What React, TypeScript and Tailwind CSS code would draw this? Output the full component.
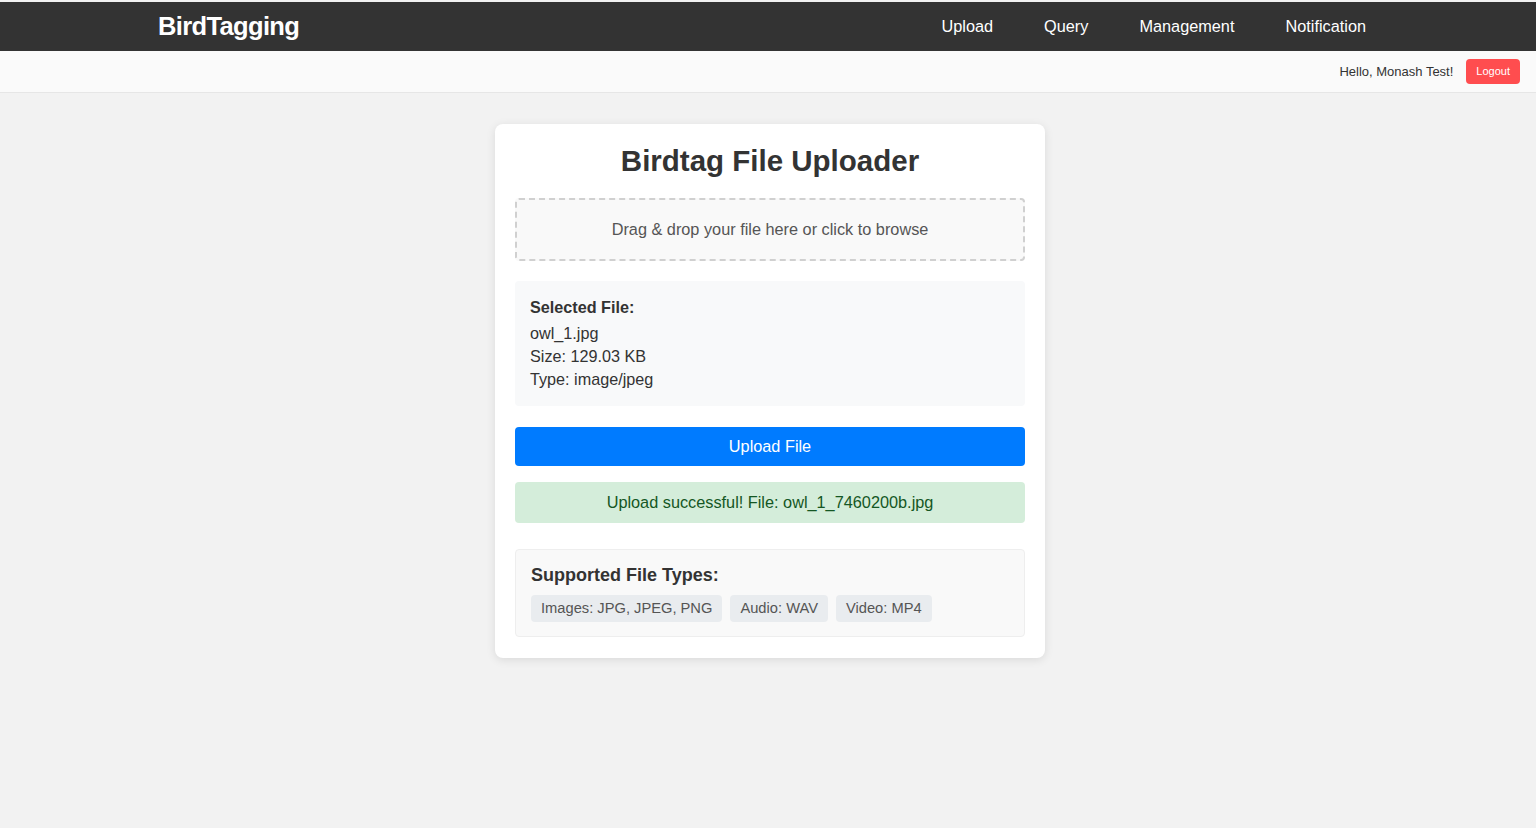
export default function App() {
  return (
    <div
      className="min-h-screen bg-[#f2f2f2] pt-[2px] text-[#333]"
      style={{ fontFamily: '"Liberation Sans", Arial, sans-serif' }}
    >
      {/* Top navigation */}
      <header className="flex h-[49px] items-center bg-[#333] pl-[158px] pr-[170px]">
        <span className="text-[25.5px] font-bold tracking-tight text-white">BirdTagging</span>
        <nav className="ml-auto flex gap-[51px] text-[16.3px] text-white">
          <a>Upload</a>
          <a>Query</a>
          <a>Management</a>
          <a>Notification</a>
        </nav>
      </header>

      {/* User bar */}
      <div className="flex h-[42px] items-center justify-end border-b border-[#e6e6e6] bg-[#fafafa] pr-[16px]">
        <span className="mr-[13px] text-[13px] text-[#333]">Hello, Monash Test!</span>
        <button className="h-[25px] rounded-[4px] bg-[#ff4d4f] px-[10px] text-[11px] text-white">
          Logout
        </button>
      </div>

      {/* Uploader card */}
      <main className="flex justify-center pl-[4px] pt-[31px]">
        <div className="w-[550px] rounded-[8px] bg-white px-[20px] pb-[21px] pt-[19px] shadow-[0_2px_10px_rgba(0,0,0,0.1)]">
          <h1 className="text-center text-[29.5px] font-bold leading-[36px] text-[#333]">
            Birdtag File Uploader
          </h1>

          <div className="mt-[19px] flex h-[63px] items-center justify-center rounded-[4px] border-2 border-dashed border-[#d0d0d0] bg-[#f9f9f9] text-[16.3px] text-[#555]">
            Drag &amp; drop your file here or click to browse
          </div>

          <div className="mt-[20px] rounded-[4px] bg-[#f8f9fa] px-[15px] pb-[15px] pt-[15px] text-[16.2px] leading-[23px] text-[#333]">
            <div className="mb-[3px] font-bold">Selected File:</div>
            <div>owl_1.jpg</div>
            <div>Size: 129.03 KB</div>
            <div>Type: image/jpeg</div>
          </div>

          <button className="mt-[21px] flex h-[39px] w-full items-center justify-center rounded-[4px] bg-[#007bff] text-[16.3px] text-white">
            Upload File
          </button>

          <div className="mt-[16px] flex h-[41px] items-center justify-center rounded-[4px] bg-[#d4edda] text-[16.3px] text-[#155724]">
            Upload successful! File: owl_1_7460200b.jpg
          </div>

          <div className="mt-[26px] rounded-[4px] border border-[#eee] bg-[#f9f9f9] px-[15px] pb-[14px] pt-[14px]">
            <h3 className="text-[18px] font-bold leading-[22px] text-[#333]">Supported File Types:</h3>
            <div className="mt-[9px] flex gap-[8px]">
              <span className="rounded-[4px] bg-[#e9ecef] px-[10px] py-[5px] text-[14.7px] leading-[17px] text-[#555]">
                Images: JPG, JPEG, PNG
              </span>
              <span className="rounded-[4px] bg-[#e9ecef] px-[10px] py-[5px] text-[14.7px] leading-[17px] text-[#555]">
                Audio: WAV
              </span>
              <span className="rounded-[4px] bg-[#e9ecef] px-[10px] py-[5px] text-[14.7px] leading-[17px] text-[#555]">
                Video: MP4
              </span>
            </div>
          </div>
        </div>
      </main>
    </div>
  );
}
